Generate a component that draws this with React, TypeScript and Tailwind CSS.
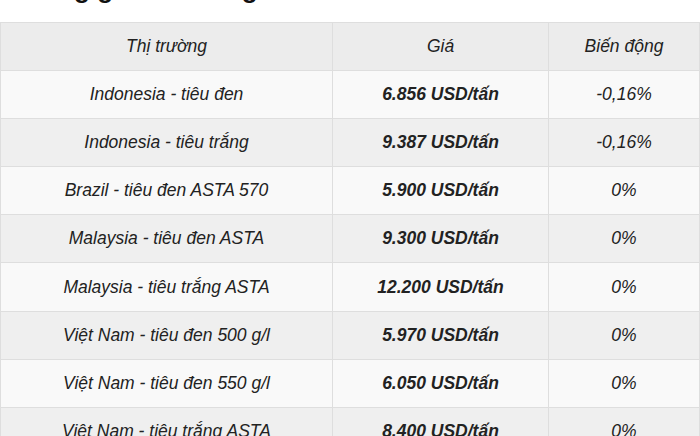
import React from 'react';

const rows = [
  { market: 'Indonesia - tiêu đen', price: '6.856 USD/tấn', change: '-0,16%' },
  { market: 'Indonesia - tiêu trắng', price: '9.387 USD/tấn', change: '-0,16%' },
  { market: 'Brazil - tiêu đen ASTA 570', price: '5.900 USD/tấn', change: '0%' },
  { market: 'Malaysia - tiêu đen ASTA', price: '9.300 USD/tấn', change: '0%' },
  { market: 'Malaysia - tiêu trắng ASTA', price: '12.200 USD/tấn', change: '0%' },
  { market: 'Việt Nam - tiêu đen 500 g/l', price: '5.970 USD/tấn', change: '0%' },
  { market: 'Việt Nam - tiêu đen 550 g/l', price: '6.050 USD/tấn', change: '0%' },
  { market: 'Việt Nam - tiêu trắng ASTA', price: '8.400 USD/tấn', change: '0%' },
];

export default function App() {
  return (
    <div className="w-[700px] h-[436px] overflow-hidden bg-white font-['Liberation_Sans',Arial,sans-serif] text-[#222]">
      {/* Heading, mostly scrolled off above */}
      <h2 className="-mt-[25px] h-[47px] pl-[25px] text-[26px] font-bold leading-[28px] text-[#111] whitespace-nowrap">
        Bảng giá tiêu thế giới
      </h2>

      <table className="w-full border-collapse table-fixed italic text-[17.5px]">
        <colgroup>
          <col className="w-[332px]" />
          <col className="w-[216px]" />
          <col />
        </colgroup>
        <thead>
          <tr className="h-[48px] bg-[#ececec]">
            <th className="border border-[#dedede] font-normal text-center">Thị trường</th>
            <th className="border border-[#dedede] font-normal text-center">Giá</th>
            <th className="border border-[#dedede] font-normal text-center">Biến động</th>
          </tr>
        </thead>
        <tbody>
          {rows.map((r, i) => (
            <tr key={r.market} className={`${i === 4 ? 'h-[49px]' : 'h-[48px]'} ${i % 2 === 0 ? 'bg-[#f9f9f9]' : 'bg-[#efefef]'}`}>
              <td className="border border-[#dedede] text-center">{r.market}</td>
              <td className="border border-[#dedede] text-center font-bold">{r.price}</td>
              <td className="border border-[#dedede] text-center">{r.change}</td>
            </tr>
          ))}
        </tbody>
      </table>
    </div>
  );
}
